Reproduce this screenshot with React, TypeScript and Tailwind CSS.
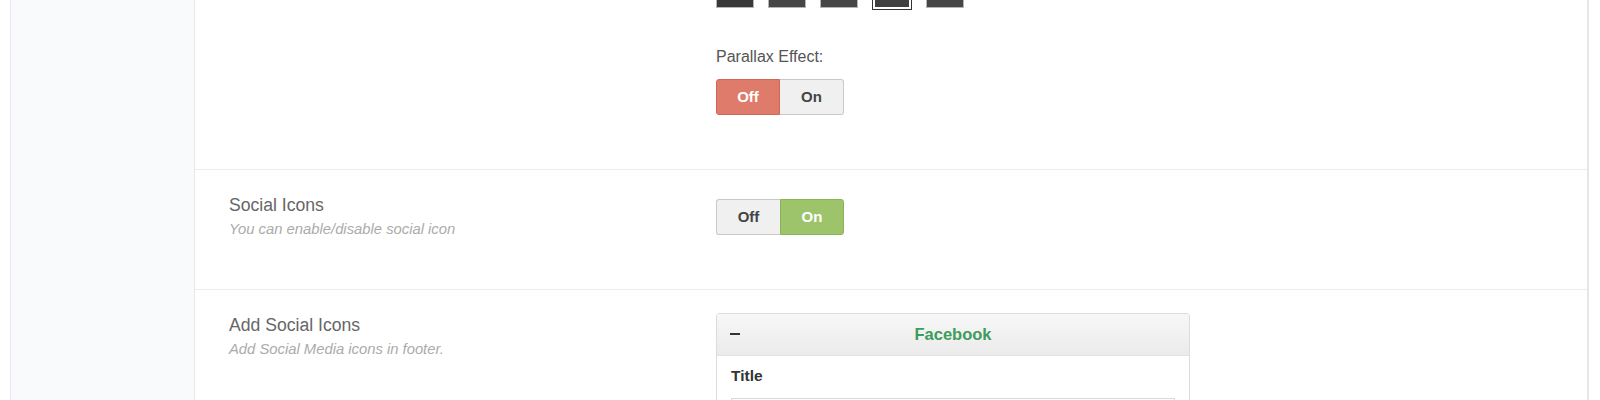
import React from 'react';

const font = { fontFamily: '"Liberation Sans", Arial, sans-serif' };

const Toggle: React.FC<{ on: boolean; variant: 'red' | 'green' }> = ({ on, variant }) => {
  const activeOff = 'bg-[#df7b6a] border-[#cf6754] text-white';
  const activeOn = 'bg-[#9dc46b] border-[#8ab357] text-white';
  const idle = 'bg-[#f0f0f0] border-[#c9c9c9] text-[#444]';
  return (
    <div className="flex h-[36px] w-[128px] text-[15px] font-bold">
      <div
        className={`flex w-[64px] items-center justify-center rounded-l-[3px] border ${
          !on && variant === 'red' ? activeOff : idle
        } ${on ? 'border-r-0' : ''}`}
      >
        Off
      </div>
      <div
        className={`flex w-[64px] items-center justify-center rounded-r-[3px] border ${
          on && variant === 'green' ? activeOn : idle
        } ${!on ? 'border-l-0' : ''}`}
      >
        On
      </div>
    </div>
  );
};

const Label: React.FC<{ title: string; desc: string }> = ({ title, desc }) => (
  <div className="pl-[34px] pt-[23px]">
    <div className="text-[17.6px] leading-[24px] text-[#666]">{title}</div>
    <div className="text-[14.8px] italic leading-[24px] text-[#ababab]">{desc}</div>
  </div>
);

export default function App() {
  const swatches = [0, 1, 2, 3, 4];
  return (
    <div className="flex h-[400px] w-full overflow-hidden bg-white" style={font}>
      {/* left gutter + sidebar */}
      <div className="w-[10px] shrink-0 bg-white" />
      <div className="w-[185px] shrink-0 border-x border-[#e6e7ea] bg-[#f9fafc]" />

      {/* main options panel */}
      <div className="flex min-w-0 flex-1 flex-col">
        {/* background options row (tail) */}
        <div className="grid h-[170px] shrink-0 grid-cols-[521px_1fr] border-b border-[#ececec]">
          <div />
          <div className="flex flex-col">
            <div className="mt-[-30px] flex h-[40px] items-start gap-[14px]">
              {swatches.map((i) =>
                i === 3 ? (
                  <div key={i} className="h-[40px] w-[40px] border border-[#333] bg-white p-[2px]">
                    <div className="h-full w-full bg-[#3f3f3f]" />
                  </div>
                ) : (
                  <div
                    key={i}
                    className={`h-[38px] w-[38px] border border-[#b5b5b5] ${i === 0 ? 'bg-[#383838]' : 'bg-[#454545]'}`}
                  />
                )
              )}
            </div>
            <div className="mt-[37px] text-[16px] leading-[20px] text-[#555]">Parallax Effect:</div>
            <div className="mt-[12px]">
              <Toggle on={false} variant="red" />
            </div>
          </div>
        </div>

        {/* social icons toggle */}
        <div className="grid h-[120px] shrink-0 grid-cols-[521px_1fr] border-b border-[#ececec]">
          <Label title="Social Icons" desc="You can enable/disable social icon" />
          <div className="pt-[29px]">
            <Toggle on={true} variant="green" />
          </div>
        </div>

        {/* add social icons */}
        <div className="grid shrink-0 grid-cols-[521px_1fr]">
          <Label title="Add Social Icons" desc="Add Social Media icons in footer." />
          <div className="pt-[23px]">
            <div className="w-[474px] rounded-[3px] border border-[#dcdcdc]">
              <div className="relative flex h-[42px] items-center justify-center border-b border-[#e2e2e2] bg-gradient-to-b from-[#f7f7f7] to-[#ebebeb]">
                <span className="absolute left-[13px] top-[19px] h-[2px] w-[10px] bg-[#333]" />
                <span className="text-[16.5px] font-bold text-[#3e9c5c]">Facebook</span>
              </div>
              <div className="px-[14px] pt-[10px]">
                <div className="text-[15.5px] font-bold leading-[20px] text-[#333]">Title</div>
                <div className="mt-[12px] h-[34px] w-full border border-[#dadada] bg-white" />
              </div>
            </div>
          </div>
        </div>
      </div>

      {/* right edge */}
      <div className="w-[2px] shrink-0 bg-[#e6e6e6]" />
      <div className="w-[11px] shrink-0 bg-white" />
    </div>
  );
}
